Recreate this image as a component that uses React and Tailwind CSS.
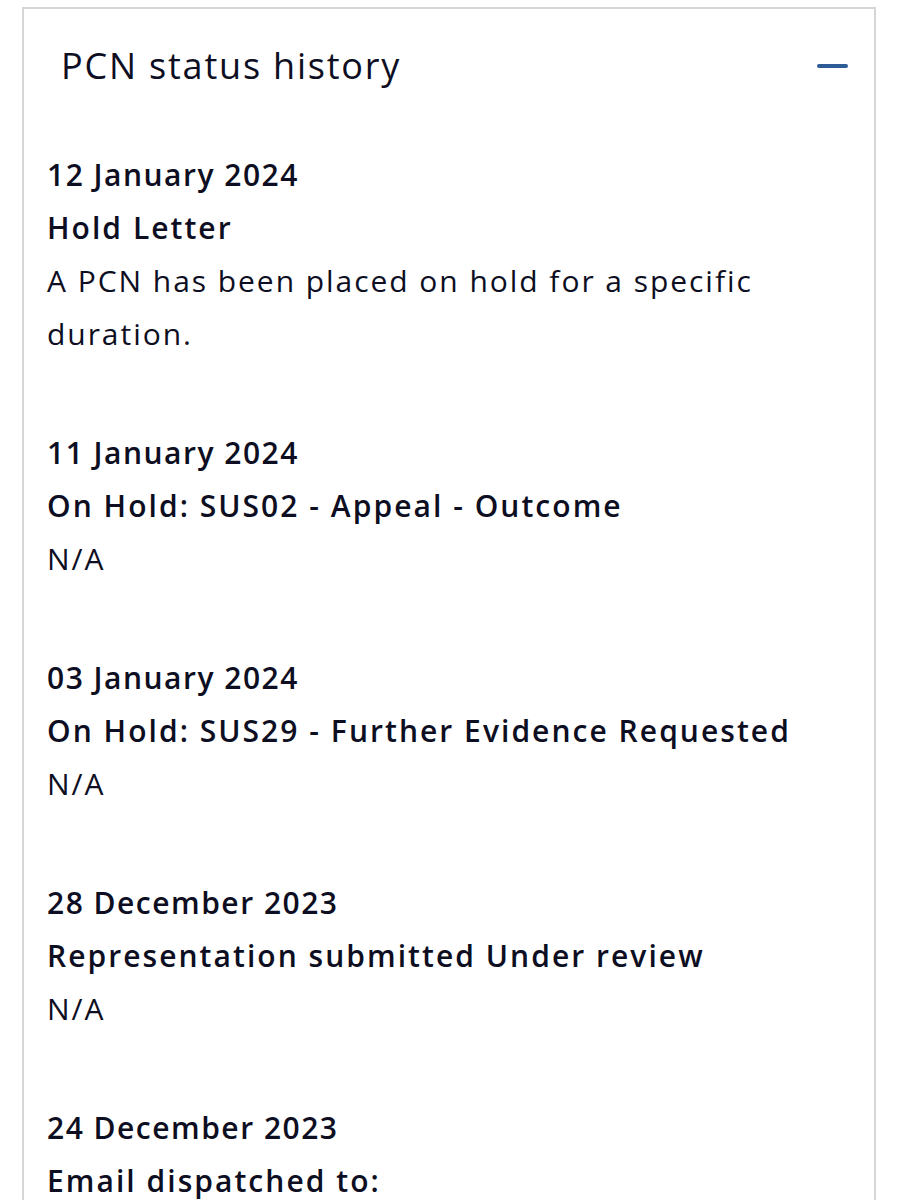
const entries = [
  {
    date: "12 January 2024",
    title: "Hold Letter",
    body: "A PCN has been placed on hold for a specific duration.",
  },
  {
    date: "11 January 2024",
    title: "On Hold: SUS02 - Appeal - Outcome",
    body: "N/A",
  },
  {
    date: "03 January 2024",
    title: "On Hold: SUS29 - Further Evidence Requested",
    body: "N/A",
  },
  {
    date: "28 December 2023",
    title: "Representation submitted Under review",
    body: "N/A",
  },
  {
    date: "24 December 2023",
    title: "Email dispatched to:",
    body: "",
  },
];

export default function App() {
  return (
    <div className="h-[1200px] overflow-hidden bg-white pt-[7px] pl-[22px] font-['Open_Sans',sans-serif] text-[#0d0e22] antialiased">
      <section className="min-h-[1300px] w-[854px] border-2 border-b-0 border-[#d6d6d6]">
        {/* header */}
        <div className="flex h-[113px] items-center justify-between pl-[37px] pr-[26px]">
          <h2 className="text-[36px] font-normal tracking-[0.05em]">PCN status history</h2>
          <span className="block h-[4px] w-[31px] rounded-full bg-[#2d5b95]" />
        </div>

        <ul className="flex flex-col gap-[66px] pl-[23px] pr-[40px] pt-[26px]">
          {entries.map((e) => (
            <li key={e.date} className="text-[30px] leading-[53px]">
              <p className="font-semibold tracking-[0.05em]">{e.date}</p>
              <p className="font-semibold tracking-[0.068em]">{e.title}</p>
              {e.body && <p className="tracking-[0.065em]">{e.body}</p>}
            </li>
          ))}
        </ul>
      </section>
    </div>
  );
}
